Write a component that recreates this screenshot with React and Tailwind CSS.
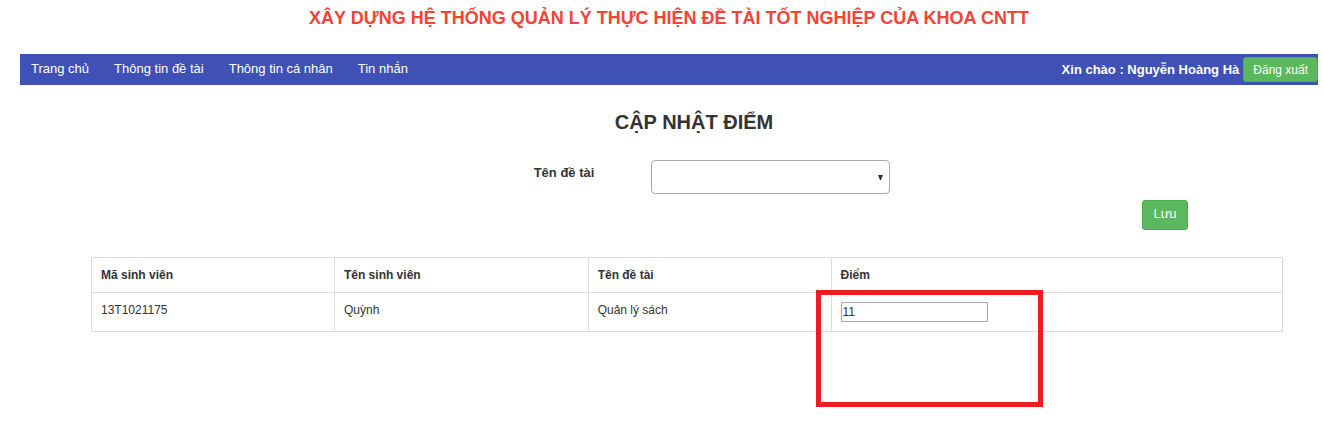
const links = ['Trang chủ', 'Thông tin đề tài', 'Thông tin cá nhân', 'Tin nhắn'];

export default function App() {
  return (
    <div className="min-h-screen bg-white pt-2 pr-[6px] pb-10 pl-5 font-['Liberation_Sans',sans-serif] text-xs text-[#333]">
      <h1 className="text-center text-lg leading-5 font-bold text-[#f44336]">
        XÂY DỰNG HỆ THỐNG QUẢN LÝ THỰC HIỆN ĐỀ TÀI TỐT NGHIỆP CỦA KHOA CNTT
      </h1>
      <div className="mt-[26px] flex h-[31px] items-center justify-between bg-[#3f51b5] pl-[11px] text-white">
        <nav className="flex gap-[25px] pb-0.5 text-[13px]">
          {links.map((l) => (
            <a key={l} href="#">{l}</a>
          ))}
        </nav>
        <div className="flex items-center gap-1">
          <span className="text-[13px] font-bold">Xin chào : Nguyễn Hoàng Hà</span>
          <button type="button" className="h-[25px] rounded-[3px] border border-[#4cae4c] bg-[#5cb85c] px-[9px] text-xs">
            Đăng xuất
          </button>
        </div>
      </div>
      <main className="pr-[35px] pl-[71px]">
        <h2 className="mt-[25px] pl-[14px] text-center text-xl leading-6 font-bold">CẬP NHẬT ĐIỂM</h2>
        <div className="mt-[26px] flex items-start justify-center gap-[57px] pl-[50px]">
          <label htmlFor="topic" className="pt-[5px] text-[13px] leading-4 font-bold">Tên đề tài</label>
          <div className="relative">
            <select id="topic" className="block h-[34px] w-[239px] appearance-none rounded border border-[#aaa] bg-white" />
            <svg viewBox="0 0 5 5" className="pointer-events-none absolute top-[15px] right-[7px] h-[5px] w-[5px] fill-[#333]" aria-hidden="true">
              <path d="M0 0h5L3 5H2z" />
            </svg>
          </div>
        </div>
        <div className="mt-[6px] flex justify-end pr-[95px]">
          <button type="button" className="h-[30px] w-[46px] rounded-[3px] border border-[#4cae4c] bg-[#5cb85c] pb-0.5 text-[13px] text-white">
            Lưu
          </button>
        </div>
        <div className="relative mt-[27px]">
          <table className="w-full table-fixed border-collapse text-left">
            <colgroup>
              <col className="w-[20.4%]" />
              <col className="w-[21.3%]" />
              <col className="w-[20.4%]" />
              <col />
            </colgroup>
            <thead>
              <tr className="h-[35px]">
                {['Mã sinh viên', 'Tên sinh viên', 'Tên đề tài', 'Điểm'].map((h) => (
                  <th key={h} className="border border-[#ddd] px-[9px] font-bold">{h}</th>
                ))}
              </tr>
            </thead>
            <tbody>
              <tr className="h-[39px] align-top">
                <td className="border border-[#ddd] px-[9px] pt-[9px]">13T1021175</td>
                <td className="border border-[#ddd] px-[9px] pt-[9px]">Quỳnh</td>
                <td className="border border-[#ddd] px-[9px] pt-[9px]">Quản lý sách</td>
                <td className="border border-[#ddd] px-[9px] pt-[9px]">
                  <input aria-label="Điểm" defaultValue="11" className="block h-5 w-[147px] border border-[#a9a9a9] px-px" />
                </td>
              </tr>
            </tbody>
          </table>
          <div className="pointer-events-none absolute top-[33px] left-[60.8%] h-[117px] w-[227px] border-[5px] border-[#ed1c24]" />
        </div>
      </main>
    </div>
  );
}
